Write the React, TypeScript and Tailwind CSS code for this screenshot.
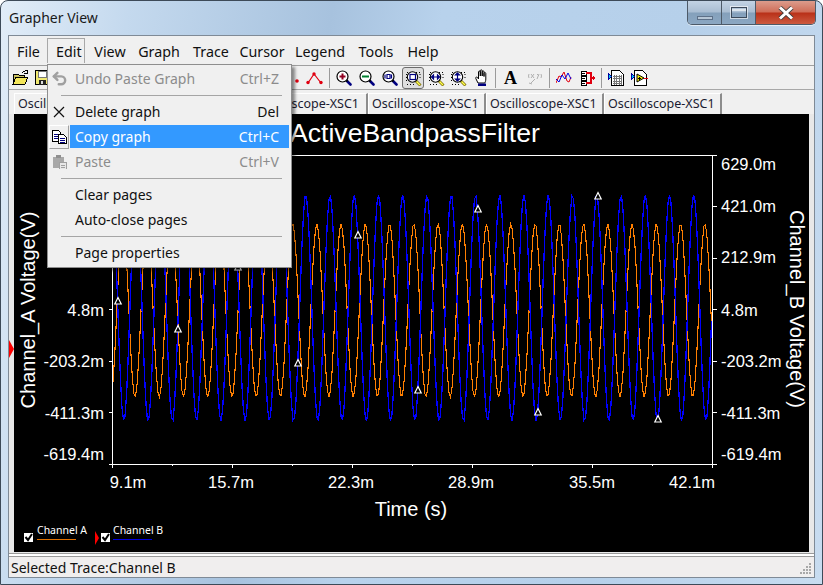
import React from "react";
import { Undo2 } from "lucide-react";

const Mag = ({ children }: { children?: React.ReactNode }) => (
  <svg width="16" height="16" viewBox="0 0 16 16">
    <path d="M10 10l4.5 4.5" stroke="#000080" strokeWidth="2.6" strokeLinecap="round" />
    <path d="M10 10l1.5 1.5" stroke="#000" strokeWidth="2" />
    <circle cx="6.5" cy="6.5" r="5.5" fill="#fff" stroke="#000" strokeWidth="1.2" />
    {children}
  </svg>
);

const MagBox = ({ children }: { children?: React.ReactNode }) => (
  <svg width="17" height="16" viewBox="0 0 17 16">
    <path d="M2 2.500h1M5 2.500h1M8 2.500h1M11 2.500h1M14 2.500h1M15 4v1M15 7v1M1.500 4v1M1.500 7v1M1.500 10v1M2 14.500h1M5 14.500h1M8 14.500h1" stroke="#000" strokeWidth="1" />
    <path d="M10.500 10.500l5 5" stroke="#7a6a00" strokeWidth="2.800" />
    <path d="M11.500 11.500l3.500 3.500" stroke="#ffff50" strokeWidth="1.400" />
    <circle cx="7.500" cy="7" r="5.200" fill="#fff" stroke="#000" strokeWidth="1.100" />
    {children}
  </svg>
);

const Folder = () => (
  <svg width="17" height="15" viewBox="0 0 17 15" shapeRendering="crispEdges">
    <path d="M1 4h5l1 1h5v2H4l-3 7z" fill="#c8c060" stroke="#000" />
    <path d="M1 14l3-7h12l-3 7z" fill="#f4e65a" stroke="#000" />
    <path d="M10 3q2-3 5-2M15 0v3h-3" fill="none" stroke="#000" />
  </svg>
);

const Save = () => (
  <svg width="15" height="15" viewBox="0 0 15 15" shapeRendering="crispEdges">
    <path d="M.5.5h13v14H.5z" fill="#f0e870" stroke="#000" />
    <path d="M3 1h8v6H3z" fill="#fff" stroke="#777" />
    <path d="M4 10h7v5H4z" fill="#222" />
    <path d="M6 11h2v3H6z" fill="#ddd" />
  </svg>
);

const Dots = () => (
  <svg width="20" height="16" viewBox="0 0 20 16">
    <circle cx="14" cy="11" r="1.8" fill="#e00010" />
  </svg>
);

const Peak = () => (
  <svg width="17" height="14" viewBox="0 0 17 14">
    <path d="M2 12l6-9 7 9" fill="none" stroke="#e00010" strokeWidth="1.2" />
    <circle cx="2" cy="11.5" r="1.7" fill="#e00010" />
    <circle cx="8" cy="3" r="1.7" fill="#e00010" />
    <circle cx="15" cy="11.5" r="1.7" fill="#e00010" />
  </svg>
);

const Hand = () => (
  <svg width="14" height="17" viewBox="0 0 14 17">
    <path d="M3 14L.8 9.5c-.5-1.3 1-2 1.8-1L3.500 10V3c0-1.300 1.800-1.300 1.800 0V7V1.800c0-1.300 1.900-1.300 1.900 0V7V2.800c0-1.300 1.800-1.300 1.800 0V7.500V4.500c0-1.300 1.800-1.300 1.800 0V10c0 2-.6 3-1 4z" fill="#fff" stroke="#000" strokeWidth="1" />
    <path d="M3 14.500h8V17H3z" fill="#000080" />
  </svg>
);

const TraceIcon = () => (
  <svg width="16" height="13" viewBox="0 0 16 13">
    <path d="M0 12l3-7 2 1 3-5 3 9 2 1 2-5" fill="none" stroke="#e00010" strokeWidth="1" />
    <path d="M0 8l3 3 3-7 3 4 3-6 3 6" fill="none" stroke="#0000e0" strokeWidth="1" />
  </svg>
);

const Summary = () => (
  <svg width="16" height="16" viewBox="0 0 16 16" shapeRendering="crispEdges">
    <path d="M1 1h5v4H1zM1 6h5v4H1zM1 11h5v4H1z" fill="#fff" stroke="#000" />
    <path d="M2 3h3M2 8h3M2 13h3" stroke="#000" />
    <path d="M6 3h5v10H6M11 8h2" fill="none" stroke="#e00010" strokeWidth="1.200" />
    <path d="M13 5.500v5l3-2.500z" fill="#e00010" />
  </svg>
);

const TableIcon = () => (
  <svg width="16" height="16" viewBox="0 0 16 16" shapeRendering="crispEdges">
    <path d="M3.500.5h8l4 4v11h-12z" fill="#fff" stroke="#000" />
    <path d="M5 6h9M5 8.500h9M5 11h9M5 13.500h9M6 5v10M8.500 5v10M11 5v10M13.500 5v10" stroke="#777" strokeWidth="1" />
    <path d="M0 3v7l3.500-3.500z" fill="#00c8f0" stroke="#0000a0" strokeWidth="1" />
  </svg>
);

const AmpIcon = () => (
  <svg width="17" height="16" viewBox="0 0 17 16" shapeRendering="crispEdges">
    <path d="M3.500.5h8l4 4v11h-12z" fill="#fff" stroke="#000" />
    <path d="M0 3v7l3.500-3.500z" fill="#00c8f0" stroke="#0000a0" strokeWidth="1" />
    <path d="M6 4v8l7-4z" fill="#f4f000" stroke="#000" strokeWidth="1" shapeRendering="auto" />
    <path d="M7 8h3M8.500 6.500v3" stroke="#000" />
    <path d="M13 8h4" stroke="#e00010" />
  </svg>
);

const Sep = ({ className }: { className: string }) => (
  <div className={`flex justify-center ${className}`}>
    <div className="h-[20px] w-px bg-[#9a9a9a]" />
  </div>
);

const Slot = ({ className, children }: { className: string; children: React.ReactNode }) => (
  <div className={`flex items-center justify-center ${className}`}>{children}</div>
);

const menuBar: [string, string][] = [
  ["File", "w-[37px] justify-center"],
  ["Edit", "w-[38px] border border-[#a8a8a8] border-b-0 pl-[8px]"],
  ["View", "w-[50px] justify-center"],
  ["Graph", "w-[48px] justify-center"],
  ["Trace", "w-[56px] justify-center"],
  ["Cursor", "w-[46px] justify-center"],
  ["Legend", "w-[70px] justify-center"],
  ["Tools", "w-[42px] justify-center"],
  ["Help", "w-[52px] justify-center"],
];

const MenuItem = ({
  label,
  shortcut,
  icon,
  disabled,
  active,
}: {
  label: string;
  shortcut?: string;
  icon?: React.ReactNode;
  disabled?: boolean;
  active?: boolean;
}) => (
  <div className="flex h-[25px] items-center">
    <div className="flex w-[22px] shrink-0 justify-center">{icon}</div>
    <div
      className={`flex h-[23px] w-[219px] items-center justify-between pl-[5px] pr-[10px] ${
        active ? "bg-[#3399ff] text-white" : disabled ? "text-[#8c8c8c]" : "text-[#111]"
      }`}
    >
      <span>{label}</span>
      {shortcut && <span>{shortcut}</span>}
    </div>
  </div>
);

const MenuSep = () => (
  <div className="flex h-[8px] items-center pl-[13px] pr-[9px]">
    <div className="h-px w-full bg-[#a5a5a5]" />
  </div>
);

const wave = (center: number, amp: number, peak: number) => {
  const period = 24.25;
  let d = "";
  for (let x = 113; x <= 712; x += 1.5) {
    const y = Math.round(center - amp * Math.cos((2 * Math.PI * (x - peak)) / period));
    d += `${d === "" ? "M" : "L"}${x.toFixed(1)} ${y}`;
  }
  return d;
};

const yTicks = [155, 206.5, 258, 309.5, 361, 412.5, 464];
const xMajor = [112, 232, 352, 472, 592, 712];
const xMinor = [172, 292, 412, 532, 652];
const tris: [number, number][] = [
  [118, 301], [178, 329], [238, 267], [298, 363], [358, 235],
  [418, 390], [478, 209], [538, 412], [598, 196], [658, 419],
];
const leftLabels: [string, number][] = [["4.8m", 316], ["-203.2m", 367], ["-411.3m", 419], ["-619.4m", 460]];
const rightLabels: [string, number][] = [
  ["629.0m", 170], ["421.0m", 212], ["212.9m", 263], ["4.8m", 316], ["-203.2m", 367], ["-411.3m", 419], ["-619.4m", 460],
];
const xLabels: [string, number][] = [["9.1m", 128], ["15.7m", 231], ["22.3m", 351], ["28.9m", 471], ["35.5m", 592], ["42.1m", 692]];

const Check = ({ x }: { x: number }) => (
  <g>
    <rect x={x} y={533} width={9} height={9} fill="#fff" />
    <path d={`M${x + 1.5} ${537}l2.500 3 4-6`} fill="none" stroke="#000" strokeWidth="2" />
  </g>
);

const Chart = () => (
  <svg
    width="795"
    height="438"
    viewBox="14 114 795 438"
    className="block font-['Liberation_Sans',sans-serif]"
  >
    <rect x="14" y="114" width="795" height="438" fill="#000" />
    <path d={wave(310.5, 86.5, 147.1)} fill="none" stroke="#ff7f00" strokeWidth="1.100" shapeRendering="crispEdges" />
    <path d={wave(308, 113, 621)} fill="none" stroke="#0000ff" strokeWidth="1.300" shapeRendering="crispEdges" />
    <g shapeRendering="crispEdges" stroke="#fff" strokeWidth="1" fill="none">
      <path d="M112.500 155V464M712.500 155V468M109 155.500H717M109 464.500H717" />
      {yTicks.map((y) => (
        <path key={y} d={`M109 ${Math.floor(y) + 0.5}H112M713 ${Math.floor(y) + 0.5}H717`} />
      ))}
      {xMajor.map((x) => (
        <path key={x} d={`M${x + 0.5} 464V468`} />
      ))}
      {xMinor.map((x) => (
        <path key={x} d={`M${x + 0.5} 464V466`} />
      ))}
    </g>
    {tris.map(([x, y]) => (
      <path key={x} d={`M${x} ${y - 3.5}l3.200 6.500h-6.400z`} fill="#000" stroke="#fff" strokeWidth="1.200" />
    ))}
    <g fill="#fff" fontSize="16.500">
      {leftLabels.map(([t, y]) => (
        <text key={t} x="104" y={y} textAnchor="end">{t}</text>
      ))}
      {rightLabels.map(([t, y]) => (
        <text key={t} x="721" y={y}>{t}</text>
      ))}
      {xLabels.map(([t, x]) => (
        <text key={t} x={x} y="488" textAnchor="middle">{t}</text>
      ))}
    </g>
    <g fill="#fff" fontSize="20">
      <text x="411" y="516" textAnchor="middle">Time (s)</text>
      <text transform="translate(35 310) rotate(-90)" textAnchor="middle">Channel_A Voltage(V)</text>
      <text transform="translate(790 309) rotate(90)" textAnchor="middle">Channel_B Voltage(V)</text>
    </g>
    <text x="290" y="142" fill="#fff" fontSize="26.600">ActiveBandpassFilter</text>
    <g className="font-['Noto_Sans',sans-serif]" fill="#fff" fontSize="10.500">
      <text x="37" y="534">Channel A</text>
      <text x="113" y="534">Channel B</text>
    </g>
    <path d="M37 539.500H76" stroke="#e07000" shapeRendering="crispEdges" />
    <path d="M113 539.500H152" stroke="#0000e0" shapeRendering="crispEdges" />
    <Check x={24} />
    <path d="M95 531v14l4-7z" fill="#ff0000" />
    <Check x={101} />
  </svg>
);

const tabs: [string, string][] = [
  ["Oscill", "justify-start pl-[3px]"],
  ["", "justify-start"],
  ["oscope-XSC1", "justify-end pr-[7px]"],
  ["Oscilloscope-XSC1", "justify-start pl-[3px]"],
  ["Oscilloscope-XSC1", "justify-start pl-[3px]"],
  ["Oscilloscope-XSC1", "justify-start pl-[3px]"],
];

export default function App() {
  return (
    <div className="relative box-border flex h-[585px] w-[823px] flex-col overflow-hidden rounded-t-[8px] border border-[#3d4a58] bg-[linear-gradient(100deg,#e2edf8_0%,#c4d9ee_14%,#a7c2de_36%,#b8d2ec_48%,#b6d0ea_75%,#c8dcf0_100%)] pl-[7px] pr-[7px] pb-[6px] font-['Noto_Sans',sans-serif] text-[14px] leading-none text-[#111]">
      <div className="flex h-[34px] shrink-0 items-start justify-between">
        <div className="pl-[1px] pt-[10px] text-[14px] text-[#1a1a1a]">Grapher View</div>
        <div className="mr-[-1px] flex h-[24px] overflow-hidden rounded-b-[5px] border border-t-0 border-[#4d5a68] shadow-[0_1px_0_rgba(255,255,255,0.6)]">
          <div className="flex w-[34px] items-end justify-center border-r border-[#4d5a68] bg-[linear-gradient(#c3d3e4_0%,#a9bdd2_48%,#84a0bb_52%,#8ba7c2_100%)] pb-[4px]">
            <div className="h-[4px] w-[16px] border border-[#5d7088] bg-[#b6c6d6]" />
          </div>
          <div className="flex w-[34px] items-center justify-center border-r border-[#4d5a68] bg-[linear-gradient(#c3d3e4_0%,#a9bdd2_48%,#84a0bb_52%,#8ba7c2_100%)]">
            <div className="h-[11px] w-[16px] border border-[#3d4a5a] bg-transparent shadow-[0_0_0_1px_rgba(255,255,255,0.6)]">
              <div className="mt-[1px] h-[7px] w-full border-t-2 border-[#dde6ee]" />
            </div>
          </div>
          <div className="flex w-[59px] items-center justify-center bg-[linear-gradient(#dc9c8c_0%,#cf6d58_48%,#b93018_52%,#cc5a40_100%)]">
            <svg width="16" height="14" viewBox="0 0 16 14">
              <path d="M2 1.500l12 11M14 1.500l-12 11" stroke="#3d3d3d" strokeWidth="4.500" />
              <path d="M2 1.500l12 11M14 1.500l-12 11" stroke="#fff" strokeWidth="3" />
            </svg>
          </div>
        </div>
      </div>

      <div className="relative flex min-h-0 flex-1 flex-col border border-[#7f8a96] bg-[#f0f0f0]">
        <div className="flex h-[30px] shrink-0 items-end border-b border-[#a0a0a0] pb-[2px] pl-px text-[14.300px]">
          {menuBar.map(([t, c]) => (
            <div key={t} className={`flex h-[25px] items-center pt-[3px] ${c}`}>
              {t}
            </div>
          ))}
        </div>

        <div className="flex h-[24px] shrink-0 items-center border-b border-[#a8a8a8]">
          <Slot className="w-[22px]"><Folder /></Slot>
          <Slot className="w-[23px]"><Save /></Slot>
          <div className="w-[229px]" />
          <Slot className="w-[20px]"><Dots /></Slot>
          <Slot className="w-[23px]"><Peak /></Slot>
          <Sep className="w-[6px]" />
          <Slot className="w-[23px]"><Mag><path d="M3.500 6.500h6M6.500 3.500v6" stroke="#900020" strokeWidth="2" /></Mag></Slot>
          <Slot className="w-[23px]"><Mag><path d="M3 6.500h7" stroke="#008030" strokeWidth="2" /></Mag></Slot>
          <Slot className="w-[23px]"><Mag><path d="M3 4.500v4M5 4.500h3v4H5zM9.500 4.500h0v4" stroke="#000080" strokeWidth="1.200" fill="none" /></Mag></Slot>
          <Slot className="w-[24px]">
            <div className="flex h-[22px] w-[22px] items-center justify-center rounded-[3px] border border-[#6c6c6c] bg-[#dedede]">
              <MagBox><rect x="5" y="4.500" width="5.500" height="5" fill="none" stroke="#000080" strokeWidth="1.200" /></MagBox>
            </div>
          </Slot>
          <Slot className="w-[22px]"><MagBox><path d="M3.500 7h8M3.500 7l2-2v4zM11.500 7l-2-2v4z" stroke="#000080" strokeWidth="1.200" fill="#000080" /></MagBox></Slot>
          <Slot className="w-[23px]"><MagBox><path d="M7.500 3v8M7.500 3l-2 2h4zM7.500 11l-2-2h4z" stroke="#000080" strokeWidth="1.200" fill="#000080" /></MagBox></Slot>
          <Slot className="w-[23px]"><Hand /></Slot>
          <Sep className="w-[4px]" />
          <Slot className="w-[27px]">
            <span className="font-['Liberation_Serif',serif] text-[18px] font-bold text-[#000]">A</span>
          </Slot>
          <Slot className="w-[23px]">
            <svg width="17" height="15" viewBox="0 0 17 15" fill="none" stroke="#b0b0b0" strokeWidth="1">
              <path d="M2 4q-1 2 0 4M14 4q1 2 0 4M4 4l3 4M7 4l-3 4M10 4l2 2M12 4l-2 5M8 9l-5 5M5 14l-3-1" />
            </svg>
          </Slot>
          <Sep className="w-[4px]" />
          <Slot className="w-[26px]"><TraceIcon /></Slot>
          <Slot className="w-[21px]"><Summary /></Slot>
          <Sep className="w-[6px]" />
          <Slot className="w-[23px]"><TableIcon /></Slot>
          <Slot className="w-[24px]"><AmpIcon /></Slot>
        </div>

        <div className="flex h-[24px] shrink-0 items-end pl-[5px]">
          {tabs.map(([t, c], i) => (
            <div
              key={i}
              className={`box-border flex h-[21px] w-[118px] items-center border-l border-r-2 border-t border-l-white border-r-[#8c8c8c] border-t-white text-[12.500px] text-[#1a1a30] ${c}`}
            >
              {t}
            </div>
          ))}
        </div>

        <div className="flex min-h-0 flex-1 bg-[#e8e8e8] pl-[5px]">
          <Chart />
        </div>

        <div className="h-[4px] shrink-0 border-b border-t border-[#9a9a9a] bg-white" />
        <div className="flex h-[20px] shrink-0 items-center justify-between bg-[#f0eeee] pl-[2px] pr-[2px] pt-[1px] text-[14px]">
          <span>Selected Trace:Channel B</span>
          <svg width="12" height="12" viewBox="0 0 12 12" fill="#a8a8a8" shapeRendering="crispEdges">
            <path d="M9 1h2v2H9zM6 4h2v2H6zM9 4h2v2H9zM3 7h2v2H3zM6 7h2v2H6zM9 7h2v2H9zM0 10h2v2H0zM3 10h2v2H3zM6 10h2v2H6zM9 10h2v2H9z" />
          </svg>
        </div>

        <svg width="5" height="18" viewBox="0 0 5 18" className="absolute left-0 top-[304px]">
          <path d="M0 0l5 9-5 9z" fill="#ff0000" />
        </svg>
      </div>

      <div className="absolute left-[46px] top-[63px] box-border h-[204px] w-[245px] border border-[#8e8e8e] bg-[#f0f0f0] pt-[1px] shadow-[3px_3px_3px_rgba(0,0,0,0.45)]">
        <MenuItem label="Undo Paste Graph" shortcut="Ctrl+Z" disabled icon={<Undo2 size={17} color="#a0a0a0" strokeWidth={3.5} />} />
        <MenuSep />
        <MenuItem
          label="Delete graph"
          shortcut="Del"
          icon={
            <svg width="12" height="12" viewBox="0 0 12 12">
              <path d="M1 1l10 10M11 1L1 11" stroke="#111" strokeWidth="1.200" />
            </svg>
          }
        />
        <MenuItem
          label="Copy graph"
          shortcut="Ctrl+C"
          active
          icon={
            <div className="flex h-[24px] w-[20px] items-center justify-center border border-b-[#a0a0a0] border-l-white border-r-[#a0a0a0] border-t-white">
              <svg width="15" height="14" viewBox="0 0 15 14" shapeRendering="crispEdges">
                <path d="M.5.5h6l2 2v9h-8z" fill="#fff" stroke="#000" />
                <path d="M2 4h5M2 6h5M2 8h5" stroke="#000080" />
                <path d="M6.500 4.500h5l3 3v6h-8z" fill="#fff" stroke="#000" />
                <path d="M8 8h5M8 10h5M8 12h5" stroke="#000080" />
              </svg>
            </div>
          }
        />
        <MenuItem
          label="Paste"
          shortcut="Ctrl+V"
          disabled
          icon={
            <svg width="15" height="14" viewBox="0 0 15 14" shapeRendering="crispEdges">
              <path d="M1 2h11v11H1z" fill="#a8a8a8" />
              <path d="M4 0h5v3H4z" fill="#8f8f8f" />
              <path d="M7 7h7v7H7z" fill="#e8e8e8" stroke="#a0a0a0" />
              <path d="M9 10h4M9 12h4" stroke="#a0a0a0" />
            </svg>
          }
        />
        <MenuSep />
        <MenuItem label="Clear pages" />
        <MenuItem label="Auto-close pages" />
        <MenuSep />
        <MenuItem label="Page properties" />
      </div>
    </div>
  );
}
